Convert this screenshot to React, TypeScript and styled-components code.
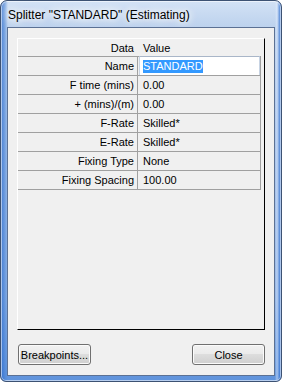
import React from "react";
import styled, { createGlobalStyle } from "styled-components";

const GlobalStyle = createGlobalStyle`
  html, body { margin: 0; padding: 0; background: #ffffff; }
  * { box-sizing: border-box; }
`;

const Window = styled.div`
  width: 282px;
  height: 382px;
  display: flex;
  flex-direction: column;
  border: 1px solid #3d5273;
  border-radius: 7px 7px 6px 6px;
  background:
    linear-gradient(90deg, rgba(40, 105, 205, 0.75) 0px, rgba(70, 130, 215, 0.5) 4px, rgba(120, 165, 225, 0.0) 7px, rgba(120, 165, 225, 0) 274px, rgba(230, 240, 255, 0.5) 276px, rgba(40, 105, 205, 0.7) 279px),
    linear-gradient(180deg, #d3e2f5 0px, #bed3ee 24px, #a9c4ea 120px, #8fb2e4 300px, #5f93dc 380px);
  box-shadow: inset 0 0 0 1px rgba(255, 255, 255, 0.55);
  overflow: hidden;
`;

const TitleBar = styled.div`
  height: 26px;
  display: flex;
  align-items: center;
  padding: 1px 0 0 7px;
  font-family: "Liberation Sans", Arial, sans-serif;
  font-size: 12px;
  color: #000;
  white-space: nowrap;
  text-shadow: 0 0 6px #fff, 0 0 10px #fff, 0 0 14px #fff;
`;

const Client = styled.div`
  flex: 1;
  margin: 0 6px 5px 6px;
  border: 1px solid #5b7194;
  background: #f0f0f0;
  display: flex;
  flex-direction: column;
  padding: 10px 9px 10px 9px;
`;

const Panel = styled.div`
  height: 292px;
  border-top: 1px solid #ffffff;
  border-left: 1px solid #ffffff;
  border-right: 1px solid #000000;
  border-bottom: 1px solid #000000;
  background: #f0f0f0;
`;

const Grid = styled.div`
  display: grid;
  grid-template-columns: 120px 123px;
  font-family: "Liberation Sans", Arial, sans-serif;
  font-size: 11px;
  color: #000;
`;

const HeadCell = styled.div<{ $align: "left" | "right" }>`
  height: 17px;
  display: flex;
  align-items: center;
  justify-content: ${(p) => (p.$align === "right" ? "flex-end" : "flex-start")};
  padding: ${(p) => (p.$align === "right" ? "0 4px 0 0" : "0 0 0 5px")};
`;

const Cell = styled.div<{ $label?: boolean; $last?: boolean }>`
  position: relative;
  height: ${(p) => (p.$last ? 20 : 19)}px;
  border-top: 1px solid #a0a0a0;
  border-bottom: ${(p) => (p.$last ? "1px solid #a0a0a0" : "none")};
  border-right: 1px solid #a0a0a0;
  display: flex;
  align-items: center;
  justify-content: ${(p) => (p.$label ? "flex-end" : "flex-start")};
  padding: ${(p) => (p.$label ? "0 3px 0 0" : "0 0 0 5px")};
  white-space: nowrap;
`;

const EditBox = styled.div`
  position: absolute;
  top: -1px;
  left: 1px;
  right: 0px;
  height: 20px;
  background: #ffffff;
  border: 1px solid #c7d3e3;
  border-top-color: #a9b6c8;
  display: flex;
  align-items: center;
  padding-left: 3px;
`;

const Selected = styled.span`
  background: #3399ff;
  color: #ffffff;
  line-height: 13px;
`;

const ButtonRow = styled.div`
  margin-top: 14px;
  display: flex;
  justify-content: space-between;
  padding-left: 1px;
`;

const Button = styled.button`
  width: 73px;
  height: 21px;
  padding: 0;
  border: 1px solid #707070;
  border-radius: 3px;
  background: linear-gradient(180deg, #f2f2f2 0%, #ebebeb 45%, #dddddd 50%, #cfcfcf 100%);
  box-shadow: inset 0 0 0 1px #fbfbfb;
  font-family: "Liberation Sans", Arial, sans-serif;
  font-size: 11px;
  color: #000;
`;

const rows: { label: string; value: string }[] = [
  { label: "Name", value: "STANDARD" },
  { label: "F time (mins)", value: "0.00" },
  { label: "+ (mins)/(m)", value: "0.00" },
  { label: "F-Rate", value: "Skilled*" },
  { label: "E-Rate", value: "Skilled*" },
  { label: "Fixing Type", value: "None" },
  { label: "Fixing Spacing", value: "100.00" },
];

export default function App() {
  return (
    <>
      <GlobalStyle />
      <Window>
        <TitleBar>Splitter "STANDARD" (Estimating)</TitleBar>
        <Client>
          <Panel>
            <Grid>
              <HeadCell $align="right">Data</HeadCell>
              <HeadCell $align="left">Value</HeadCell>
              {rows.map((r, i) => {
                const last = i === rows.length - 1;
                return (
                  <React.Fragment key={r.label}>
                    <Cell $label $last={last}>{r.label}</Cell>
                    <Cell $last={last}>
                      {i === 0 ? (
                        <EditBox>
                          <Selected>{r.value}</Selected>
                        </EditBox>
                      ) : (
                        r.value
                      )}
                    </Cell>
                  </React.Fragment>
                );
              })}
            </Grid>
          </Panel>
          <ButtonRow>
            <Button>Breakpoints...</Button>
            <Button>Close</Button>
          </ButtonRow>
        </Client>
      </Window>
    </>
  );
}
